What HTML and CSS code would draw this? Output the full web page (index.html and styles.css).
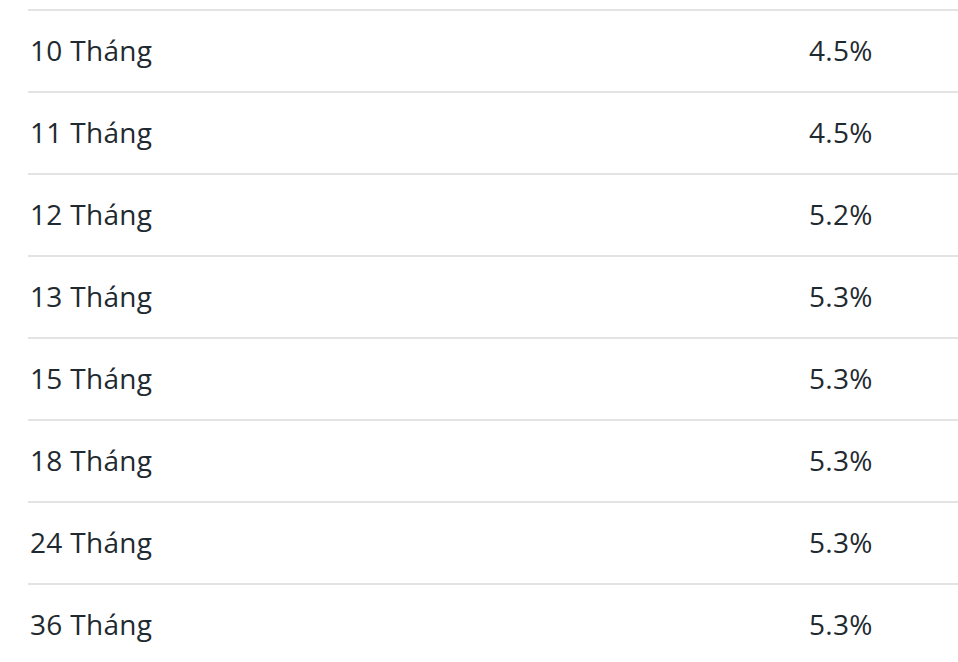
FILE: index.html
```html
<!DOCTYPE html>
<html lang="vi">
<head>
<meta charset="utf-8">
<link rel="stylesheet" href="styles.css">
</head>
<body>
<div class="table">
  <div class="row"><div class="term">10 Tháng</div><div class="rate">4.5%</div></div>
  <div class="row"><div class="term">11 Tháng</div><div class="rate">4.5%</div></div>
  <div class="row"><div class="term">12 Tháng</div><div class="rate">5.2%</div></div>
  <div class="row"><div class="term">13 Tháng</div><div class="rate">5.3%</div></div>
  <div class="row"><div class="term">15 Tháng</div><div class="rate">5.3%</div></div>
  <div class="row"><div class="term">18 Tháng</div><div class="rate">5.3%</div></div>
  <div class="row"><div class="term">24 Tháng</div><div class="rate">5.3%</div></div>
  <div class="row"><div class="term">36 Tháng</div><div class="rate">5.3%</div></div>
</div>
</body>
</html>
```
FILE: styles.css
```css
html, body {
  margin: 0;
  padding: 0;
  background: #ffffff;
}
body {
  font-family: "Open Sans", "Noto Sans", sans-serif;
  color: #1f2a30;
  overflow: hidden;
}
.table {
  margin-left: 28px;
  padding-top: 9px;
}
.row {
  display: grid;
  grid-template-columns: 781px 1fr;
  height: 82px;
  box-sizing: border-box;
  border-top: 2px solid #e3e3e3;
  align-items: center;
  font-size: 28px;
  letter-spacing: 0.3px;
  padding-bottom: 3px;
}
.term {
  padding-left: 2px;
}
```
